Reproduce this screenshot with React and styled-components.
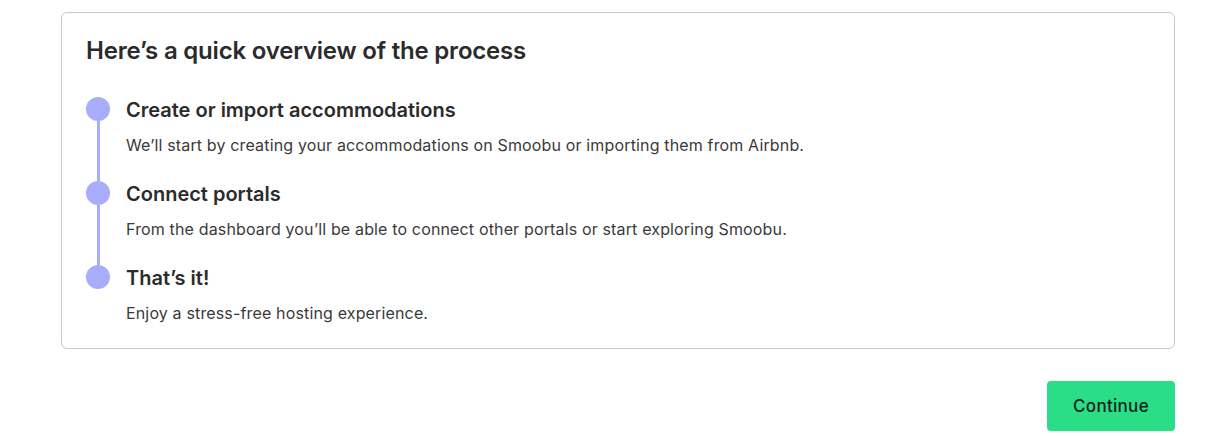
import React from 'react';
import styled, { createGlobalStyle } from 'styled-components';

const GlobalStyle = createGlobalStyle`
  body {
    margin: 0;
    background: #fff;
    font-family: Inter, "Noto Sans", sans-serif;
    color: #2b2b2b;
  }
`;

const Page = styled.div`
  width: 1114px;
  padding: 12px 0 0 61px;
  display: flex;
  flex-direction: column;
`;

const Card = styled.section`
  border: 1px solid #c8c8c8;
  border-radius: 6px;
  padding: 23px 24px 23px;
`;

const Title = styled.h2`
  margin: 0 0 31px;
  font-size: 24px;
  line-height: 30px;
  font-weight: 600;
  color: #2b2b2b;
  letter-spacing: -0.2px;
`;

const Steps = styled.ol`
  list-style: none;
  margin: 0;
  padding: 0;
`;

const Step = styled.li`
  display: flex;
  gap: 16px;
`;

const Marker = styled.div`
  width: 24px;
  display: flex;
  flex-direction: column;
  align-items: center;
  flex-shrink: 0;
`;

const Dot = styled.span`
  width: 24px;
  height: 24px;
  border-radius: 50%;
  background: #a8adfb;
`;

const Line = styled.span`
  width: 3px;
  flex: 1;
  background: #a8adfb;
`;

const Content = styled.div`
  padding-bottom: ${p => (p.$last ? '0' : '24px')};
`;

const StepTitle = styled.h3`
  margin: 1px 0 11px;
  font-size: 20px;
  line-height: 24px;
  font-weight: 600;
  color: #2b2b2b;
`;

const StepText = styled.p`
  margin: 0;
  font-size: 16px;
  line-height: 24px;
  letter-spacing: 0.15px;
  color: #3a3a3a;
`;

const Actions = styled.div`
  display: flex;
  justify-content: flex-end;
  margin-top: 32px;
`;

const Button = styled.button`
  width: 128px;
  height: 50px;
  border: none;
  border-radius: 4px;
  background: #2ade88;
  color: #15241c;
  font-family: inherit;
  font-size: 17px;
  font-weight: 500;
  letter-spacing: 0.3px;
  cursor: pointer;
`;

const steps = [
  {
    title: 'Create or import accommodations',
    text: 'We’ll start by creating your accommodations on Smoobu or importing them from Airbnb.',
  },
  {
    title: 'Connect portals',
    text: 'From the dashboard you’ll be able to connect other portals or start exploring Smoobu.',
  },
  {
    title: 'That’s it!',
    text: 'Enjoy a stress-free hosting experience.',
  },
];

const App = () => (
  <>
    <GlobalStyle />
    <Page>
      <Card>
        <Title>Here’s a quick overview of the process</Title>
        <Steps>
          {steps.map((s, i) => {
            const last = i === steps.length - 1;
            return (
              <Step key={s.title}>
                <Marker>
                  <Dot />
                  {!last && <Line />}
                </Marker>
                <Content $last={last}>
                  <StepTitle>{s.title}</StepTitle>
                  <StepText>{s.text}</StepText>
                </Content>
              </Step>
            );
          })}
        </Steps>
      </Card>
      <Actions>
        <Button>Continue</Button>
      </Actions>
    </Page>
  </>
);

export default App;
